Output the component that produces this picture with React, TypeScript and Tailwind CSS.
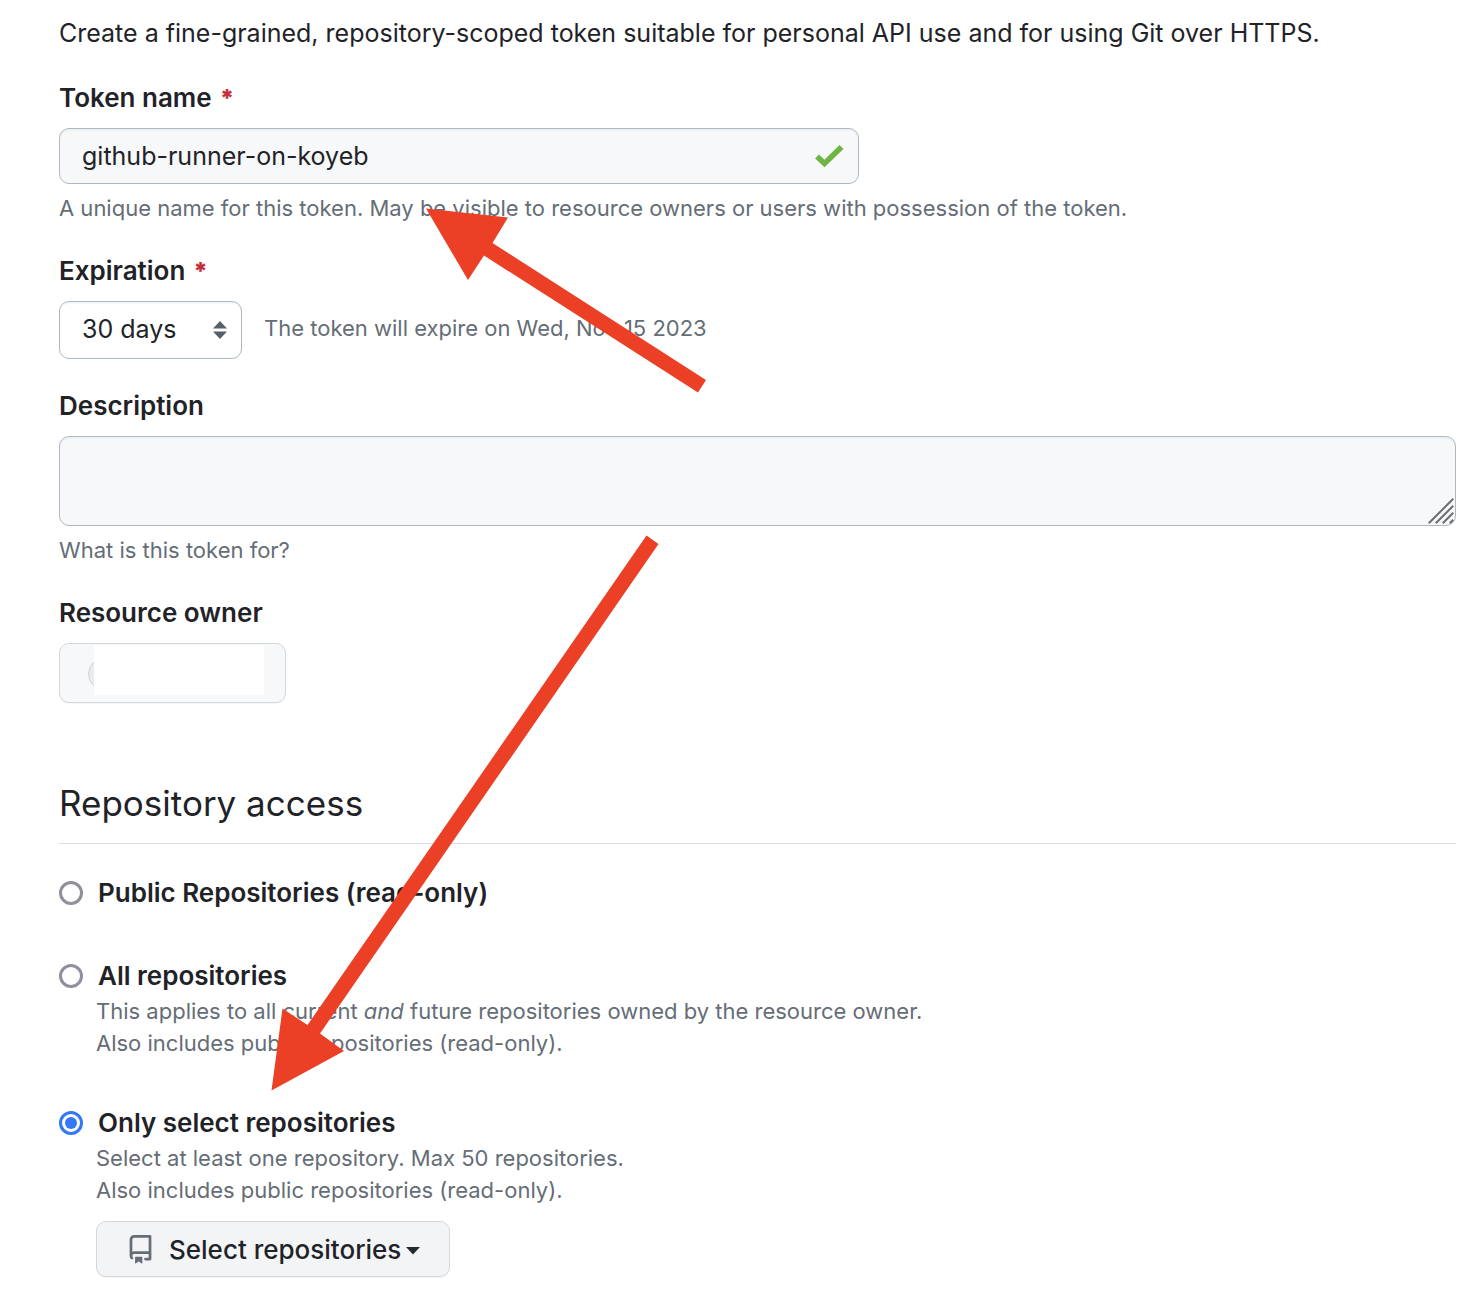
import { useState, type ReactNode } from "react";

function FieldLabel({ htmlFor, required, children }: { htmlFor: string; required?: boolean; children: ReactNode }) {
  return (
    <label htmlFor={htmlFor} className="mb-3.5 block text-[26px] leading-8 font-semibold">
      {children}
      {required && <span className="ml-2 text-[24px] leading-6 font-black text-[#c4303a]">*</span>}
    </label>
  );
}

function Note({ children }: { children: ReactNode }) {
  return <p className="text-[22px] leading-8 text-[#656d76]">{children}</p>;
}

type Access = "public" | "all" | "selected";

function AccessOption({
  id,
  label,
  value,
  onChange,
  children,
}: {
  id: Access;
  label: string;
  value: Access;
  onChange: (value: Access) => void;
  children?: ReactNode;
}) {
  return (
    <div>
      <div className="flex items-center gap-[15px]">
        <span className="grid size-6 shrink-0 place-items-center">
          <input
            id={id}
            type="radio"
            name="access"
            checked={value === id}
            onChange={() => onChange(id)}
            className="peer col-start-1 row-start-1 size-6 appearance-none rounded-full border-3 border-[#8f8f9d] bg-white checked:border-[#3478f6]"
          />
          <span className="pointer-events-none col-start-1 row-start-1 hidden size-3 rounded-full bg-[#3478f6] peer-checked:block" />
        </span>
        <label htmlFor={id} className="text-[26px] leading-[39px] font-semibold">
          {label}
        </label>
      </div>
      {children && <div className="pl-[37px]">{children}</div>}
    </div>
  );
}

function Arrows() {
  return (
    <svg
      className="pointer-events-none absolute top-0 left-0"
      width="1482"
      height="1310"
      viewBox="0 0 1482 1310"
      fill="#eb4026"
      aria-hidden="true"
    >
      <path d="M426 208.500 508 217.500 492.500 243 706 380 698 392.500 484 255.500 468 280Z" />
      <path d="M646.500 535.500 658.500 544 320 1033.500 344 1051 271.500 1090.500 282.500 1008.500 307.500 1025Z" />
    </svg>
  );
}

export default function App() {
  const [name, setName] = useState("github-runner-on-koyeb");
  const [description, setDescription] = useState("");
  const [access, setAccess] = useState<Access>("selected");

  return (
    <main className="relative min-h-screen overflow-hidden bg-white pt-[13px] pr-[26px] pb-8 pl-[59px] font-['Inter',sans-serif] text-[#1f2328]">
      <p className="mb-[29px] text-[25px] leading-10">
        Create a fine-grained, repository-scoped token suitable for personal API use and for using Git over HTTPS.
      </p>

      <form className="flex flex-col gap-[31px]">
        <div>
          <FieldLabel htmlFor="name" required>
            Token name
          </FieldLabel>
          <div className="mb-2 flex h-14 max-w-[800px] items-center rounded-[10px] border border-[#afb8c1] bg-[#f6f8fa] pr-3.5 pl-[22px] shadow-[inset_0_2px_0_rgba(208,215,222,0.2)]">
            <input
              id="name"
              type="text"
              value={name}
              onChange={(e) => setName(e.target.value)}
              className="min-w-0 flex-1 bg-transparent text-[25px] leading-10 outline-none"
            />
            <svg width="30" height="24" viewBox="0 0 30 24" fill="none" aria-hidden="true">
              <path d="M3 12.500 10.500 19.500 27.500 3" stroke="#6fb544" strokeWidth="5.500" />
            </svg>
          </div>
          <Note>A unique name for this token. May be visible to resource owners or users with possession of the token.</Note>
        </div>

        <div>
          <FieldLabel htmlFor="expiration" required>
            Expiration
          </FieldLabel>
          <div className="flex items-center gap-[22px]">
            <div className="grid items-center">
              <select
                id="expiration"
                defaultValue="30"
                className="col-start-1 row-start-1 h-[58px] w-[183px] appearance-none rounded-[10px] border border-[#afb8c1] bg-white pl-[22px] text-[25px] shadow-[inset_0_2px_0_rgba(208,215,222,0.2)]"
              >
                <option value="7">7 days</option>
                <option value="30">30 days</option>
                <option value="60">60 days</option>
                <option value="90">90 days</option>
              </select>
              <svg
                className="pointer-events-none col-start-1 row-start-1 mr-[15px] justify-self-end"
                width="14"
                height="18"
                viewBox="0 0 14 18"
                fill="#57606a"
                aria-hidden="true"
              >
                <path d="M7 0 14 7.500H0ZM0 10.500H14L7 18Z" />
              </svg>
            </div>
            <div className="pb-1">
              <Note>The token will expire on Wed, Nov 15 2023</Note>
            </div>
          </div>
        </div>

        <div>
          <FieldLabel htmlFor="description">Description</FieldLabel>
          <div className="mb-2 grid">
            <textarea
              id="description"
              value={description}
              onChange={(e) => setDescription(e.target.value)}
              className="col-start-1 row-start-1 h-[90px] w-full resize-none rounded-[10px] border border-[#afb8c1] bg-[#f6f8fa] px-[22px] py-2 text-[25px] shadow-[inset_0_2px_0_rgba(208,215,222,0.2)]"
            />
            <svg
              className="pointer-events-none col-start-1 row-start-1 mr-0.5 mb-0.5 self-end justify-self-end"
              width="26"
              height="26"
              viewBox="0 0 26 26"
              stroke="#6e6e6e"
              strokeWidth="2"
              strokeLinecap="square"
              aria-hidden="true"
            >
              <path d="M1.500 24.500 24.500 1.500M8.500 24.500 24.500 8.500M15.500 24.500 24.500 15.500M22.500 24.500 24.500 22.500" />
            </svg>
          </div>
          <Note>What is this token for?</Note>
        </div>

        <div>
          <FieldLabel htmlFor="owner">Resource owner</FieldLabel>
          <button
            id="owner"
            type="button"
            className="flex h-[60px] w-[227px] rounded-[10px] border border-[#d5d8da] bg-[#f6f8fa] pt-0.5 pl-7 shadow-[0_1px_0_rgba(31,35,40,0.04)]"
          >
            <span className="mt-3 h-8 w-1.5 overflow-hidden">
              <span className="block size-8 rounded-full border border-[#d0d3d6] bg-[#ebebeb]" />
            </span>
            <span className="h-[49px] w-[170px] bg-white" />
          </button>
        </div>
      </form>

      <section>
        <h2 className="mt-[76px] border-b border-[#d8dee4] pb-4 text-[35px] leading-12">Repository access</h2>
        <div className="mt-[29px] flex flex-col gap-11">
          <AccessOption id="public" label="Public Repositories (read-only)" value={access} onChange={setAccess} />
          <AccessOption id="all" label="All repositories" value={access} onChange={setAccess}>
            <Note>
              This applies to all current <em>and</em> future repositories owned by the resource owner.
              <br />
              Also includes public repositories (read-only).
            </Note>
          </AccessOption>
          <AccessOption id="selected" label="Only select repositories" value={access} onChange={setAccess}>
            <Note>
              Select at least one repository. Max 50 repositories.
              <br />
              Also includes public repositories (read-only).
            </Note>
            <button
              type="button"
              className="mt-[15px] flex h-14 items-center rounded-[10px] border border-[#d5d8da] bg-[#f3f4f6] px-[29px] text-[26px] font-medium shadow-[0_1px_0_rgba(31,35,40,0.04)]"
            >
              <svg width="29" height="29" viewBox="0 0 16 16" fill="#656d76" aria-hidden="true">
                <path d="M2 2.500A2.500 2.500 0 0 1 4.500 0h8.750a.75.75 0 0 1 .75.75v12.500a.75.75 0 0 1-.75.75h-2.500a.75.75 0 0 1 0-1.500h1.750v-2h-8a1 1 0 0 0-.714 1.700.75.75 0 1 1-1.072 1.050A2.495 2.495 0 0 1 2 11.500Zm10.500-1h-8a1 1 0 0 0-1 1v6.708A2.486 2.486 0 0 1 4.500 9h8ZM5 12.250a.25.25 0 0 1 .25-.25h3.500a.25.25 0 0 1 .25.25v3.250a.25.25 0 0 1-.4.2l-1.450-1.087a.249.249 0 0 0-.3 0L5.400 15.700a.25.25 0 0 1-.4-.2Z" />
              </svg>
              <span className="ml-3.5">Select repositories</span>
              <svg className="mt-1 ml-[5px]" width="14" height="8" viewBox="0 0 14 8" fill="#24292f" aria-hidden="true">
                <path d="M0 0H14L7 7.500Z" />
              </svg>
            </button>
          </AccessOption>
        </div>
      </section>

      <Arrows />
    </main>
  );
}
